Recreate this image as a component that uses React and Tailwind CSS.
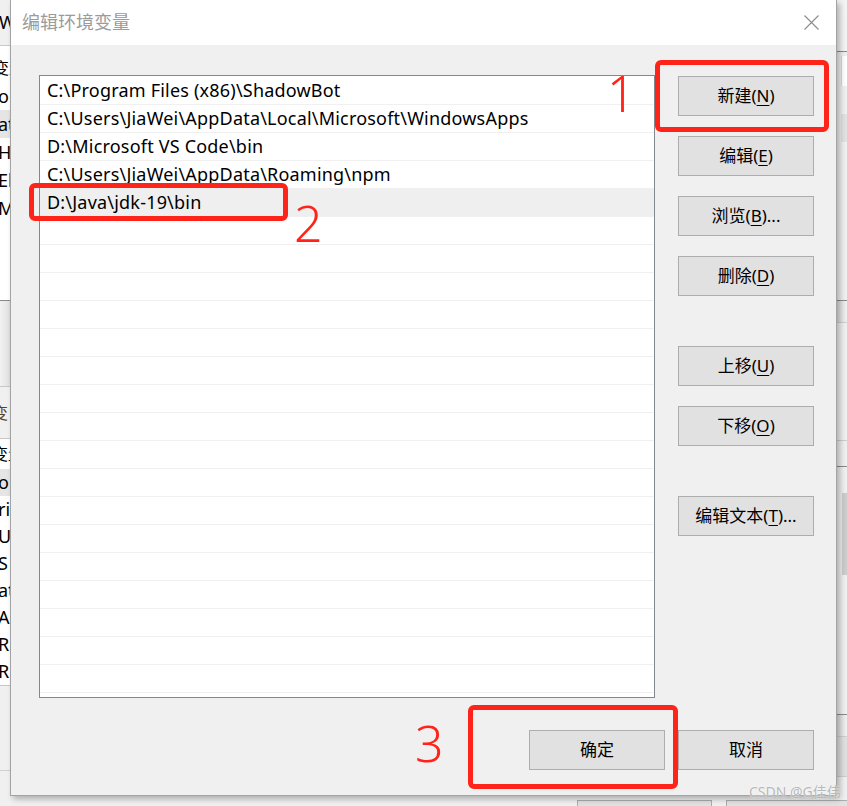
const PATHS = [
  "C:\\Program Files (x86)\\ShadowBot",
  "C:\\Users\\JiaWei\\AppData\\Local\\Microsoft\\WindowsApps",
  "D:\\Microsoft VS Code\\bin",
  "C:\\Users\\JiaWei\\AppData\\Roaming\\npm",
  "D:\\Java\\jdk-19\\bin",
];

const ROW_COUNT = 22;
const SELECTED = 4;

const SIDE_BUTTONS = [
  { label: "新建", key: "N", gap: 0 },
  { label: "编辑", key: "E", gap: 20 },
  { label: "浏览", key: "B", tail: "...", gap: 20 },
  { label: "删除", key: "D", gap: 20 },
  { label: "上移", key: "U", gap: 50 },
  { label: "下移", key: "O", gap: 20 },
  { label: "编辑文本", key: "T", tail: "...", gap: 50 },
];

const FONT = "font-['Noto_Sans','Noto_Sans_CJK_SC',sans-serif]";

function WinButton({ label, mnemonic, tail, className = "" }) {
  return (
    <button
      className={`h-[40px] w-[136px] border border-[#adadad] bg-[#e1e1e1] text-[17px] text-black ${FONT} flex items-center justify-center ${className}`}
    >
      {label}
      {mnemonic && (
        <span>
          (<span className="underline underline-offset-[3px] decoration-1">{mnemonic}</span>)
        </span>
      )}
      {tail}
    </button>
  );
}

function BackdropLeft() {
  const upper = ["变量", "on", "at", "H", "El", "M"];
  const lower = ["o", "ri", "U", "S", "at", "A", "R", "R"];
  return (
    <div className={`absolute left-0 top-0 w-[12px] h-[806px] overflow-hidden whitespace-nowrap ${FONT} text-[18px] text-black`}>
      <div className="h-[45px] bg-[#f0f0f0] flex items-center -ml-[1px]">We</div>
      <div className="h-[255px] bg-white border-t border-[#c8c8c8] flex flex-col pt-[8px]">
        {upper.map((t, i) => (
          <div key={i} className={`h-[28px] flex items-center ${i === 0 ? "-ml-[7px] text-[16px]" : "-ml-[2px]"} ${i === 2 ? "bg-[#e5e5e5]" : ""}`}>
            {t}
          </div>
        ))}
      </div>
      <div className="h-[86px] border-t border-[#8a8a8a] bg-gradient-to-r from-[#f2f2f2] to-[#dcdcdc]" />
      <div className="h-[52px] border-t border-[#c8c8c8] bg-[#f0f0f0] flex items-center -ml-[8px] text-[16px] text-[#5a4020]">变</div>
      <div className="h-[248px] border-t border-[#c8c8c8] border-b bg-white flex flex-col">
        <div className="h-[32px] flex items-center -ml-[8px] text-[16px]">变量</div>
        {lower.map((t, i) => (
          <div key={i} className={`h-[28px] flex items-center -ml-[2px] ${i === 0 ? "bg-[#e5e5e5]" : ""}`}>
            {t}
          </div>
        ))}
      </div>
      <div className="h-[85px] bg-[#f0f0f0] border-b border-[#d0d0d0]" />
    </div>
  );
}

function BackdropRight() {
  return (
    <div className="absolute left-[836px] top-0 w-[11px] h-[806px] overflow-hidden bg-[#f0f0f0] flex flex-col">
      <div className="h-[52px] bg-[#f4f4f4] border-b border-[#8a8a8a] shrink-0" />
      <div className="h-[248px] flex flex-col shrink-0 pl-[5px] pt-[4px] gap-[28px]">
        <div className="h-[30px] w-[6px] bg-white border-l border-[#dadada]" />
        <div className="h-[28px] w-[6px] bg-[#e2e2e2]" />
      </div>
      <div className="h-[23px] border-t border-[#8a8a8a] border-b border-b-[#cfcfcf] shrink-0 bg-gradient-to-r from-[#dcdcdc] to-[#f0f0f0]" />
      <div className="h-[117px] shrink-0" />
      <div className="h-[27px] border-t border-[#cfcfcf] border-b border-b-[#8a8a8a] shrink-0" />
      <div className="h-[247px] shrink-0 flex pl-[6px] pt-[26px]">
        <div className="w-[5px] h-[82px] bg-[#cdcdcd]" />
      </div>
      <div className="h-[23px] border-t border-[#8a8a8a] border-b border-b-[#cfcfcf] bg-gradient-to-r from-[#dcdcdc] to-[#f0f0f0] shrink-0" />
      <div className="h-[40px] bg-[#e0e0e0] border-b border-[#cfcfcf] shrink-0" />
    </div>
  );
}

function RedNumber({ n, className }) {
  return (
    <div className={`absolute text-[#ff2419] text-[50px] leading-none font-['Noto_Sans',sans-serif] font-light ${className}`}>
      {n}
    </div>
  );
}

export default function App() {
  return (
    <div className="relative w-[847px] h-[806px] overflow-hidden bg-[#f0f0f0]">
      <BackdropLeft />
      <BackdropRight />

      {/* background window buttons peeking under the dialog */}
      <div className="absolute left-[577px] top-[800px] w-[135px] h-[20px] border border-[#adadad] bg-[#e1e1e1]" />
      <div className="absolute left-[726px] top-[800px] w-[135px] h-[20px] border border-[#adadad] bg-[#e1e1e1]" />

      {/* dialog */}
      <div className="absolute left-[10px] top-0 w-[827px] h-[796px] flex flex-col border-x border-b border-[#a3a3a3] shadow-[3px_3px_6px_rgba(0,0,0,0.28)]">
        <div className="h-[45px] bg-white flex items-center justify-between pl-[11px] pr-[17px] shrink-0">
          <span className={`text-[18px] text-[#9b9b9b] ${FONT}`}>编辑环境变量</span>
          <svg width="15" height="15" viewBox="0 0 15 15" className="-mt-[1px]">
            <path d="M0.5 0.5L14.5 14.5M14.5 0.5L0.5 14.5" stroke="#8c8c8c" strokeWidth="1.1" fill="none" />
          </svg>
        </div>

        <div className="flex-1 bg-[#f0f0f0] flex flex-col pl-[28px] pt-[30px] pr-[22px]">
          <div className="flex gap-[23px]">
            <div className="w-[616px] h-[623px] border border-[#828790] bg-white pt-[1px] overflow-hidden">
              {Array.from({ length: ROW_COUNT }).map((_, i) => (
                <div key={i} className="h-[28px] border-b border-[#f0f0f0] flex">
                  <div
                    className={`flex-1 flex items-center pl-[7px] text-[18px] tracking-[0.2px] text-black ${FONT} ${
                      i === SELECTED ? "bg-[#efefef]" : ""
                    }`}
                  >
                    {PATHS[i] || ""}
                  </div>
                </div>
              ))}
            </div>

            <div className="flex flex-col pt-[1px]">
              {SIDE_BUTTONS.map((b) => (
                <WinButton
                  key={b.key}
                  label={b.label}
                  mnemonic={b.key}
                  tail={b.tail}
                  className={b.gap === 50 ? "mt-[50px]" : b.gap === 20 ? "mt-[20px]" : ""}
                />
              ))}
            </div>
          </div>

          <div className="flex justify-end gap-[13px] mt-[32px]">
            <WinButton label="确定" />
            <WinButton label="取消" />
          </div>
        </div>
      </div>

      {/* annotations */}
      <div className="absolute left-[655px] top-[60px] w-[174px] h-[72px] border-[5px] border-[#ff2419] rounded-[6px]" />
      <div className="absolute left-[29px] top-[183px] w-[259px] h-[38px] border-[5px] border-[#ff2419] rounded-[6px]" />
      <div className="absolute left-[468px] top-[705px] w-[210px] h-[84px] border-[5px] border-[#ff2419] rounded-[6px]" />
      <RedNumber n="1" className="left-[607px] top-[68px]" />
      <RedNumber n="2" className="left-[294px] top-[198px]" />
      <RedNumber n="3" className="left-[415px] top-[718px]" />

      <div className="absolute left-[749px] top-[781px] text-[14px] text-[#b8b8b8] font-['Noto_Sans','Noto_Sans_CJK_SC',sans-serif] [text-shadow:0_0_2px_#fff]">
        CSDN @G佳伟
      </div>
    </div>
  );
}
